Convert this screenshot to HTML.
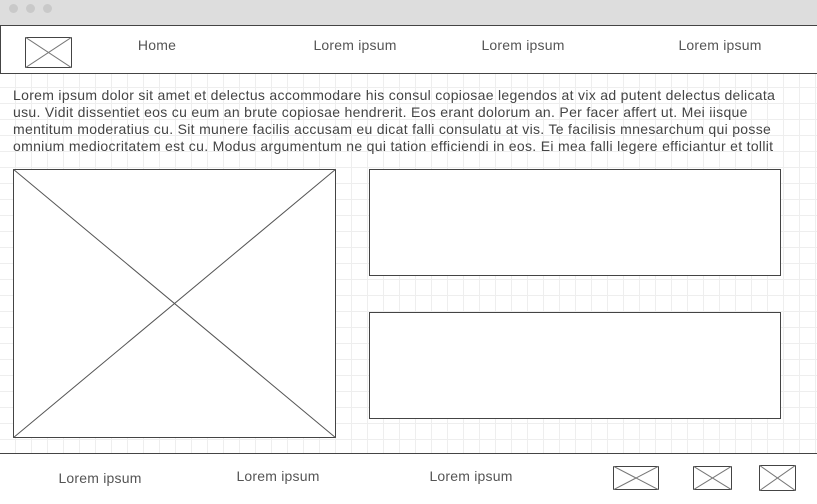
<!DOCTYPE html>
<html><head><style>
body{margin:0;width:817px;height:503px;overflow:hidden;position:relative;font-family:"Liberation Sans",sans-serif;color:#555;
background-color:#fff;
background-image:linear-gradient(#eee 1px,transparent 1px),linear-gradient(90deg,#eee 1px,transparent 1px);
background-size:16px 16px;background-position:15px 7px;}
.a{position:absolute}
.bar{left:0;top:0;width:817px;height:25px;background:#ddd}
.dot{width:9px;height:9px;border-radius:50%;background:#c9c9c9;top:4px}
.box{border:1px solid #444;box-sizing:border-box;background:#fff}
.t{font-size:14px;transform:translateX(-50%);white-space:nowrap;letter-spacing:0.2px}
.p{left:13px;top:87px;font-size:14px;line-height:17px;color:#444;white-space:nowrap;letter-spacing:0.31px}
</style></head><body>
<div class="a bar"></div>
<div class="a dot" style="left:9px"></div><div class="a dot" style="left:26px"></div><div class="a dot" style="left:43px"></div>
<div class="a box" style="left:0;top:25px;width:818px;height:49px;border-width:1px 0 1px 1px"></div>
<svg class="a" style="left:25px;top:37px" width="47" height="31"><rect x="0.5" y="0.5" width="46" height="30" fill="#fff" stroke="#444"/><path d="M0 0L47 31M47 0L0 31" stroke="#777"/></svg>
<div class="a t" style="left:157px;top:37px">Home</div>
<div class="a t" style="left:355px;top:37px">Lorem ipsum</div>
<div class="a t" style="left:523px;top:37px">Lorem ipsum</div>
<div class="a t" style="left:720px;top:37px">Lorem ipsum</div>
<div class="a p">Lorem ipsum dolor sit amet et delectus accommodare his consul copiosae legendos at vix ad putent delectus delicata<br>usu. Vidit dissentiet eos cu eum an brute copiosae hendrerit. Eos erant dolorum an. Per facer affert ut. Mei iisque<br>mentitum moderatius cu. Sit munere facilis accusam eu dicat falli consulatu at vis. Te facilisis mnesarchum qui posse<br>omnium mediocritatem est cu. Modus argumentum ne qui tation efficiendi in eos. Ei mea falli legere efficiantur et tollit</div>
<svg class="a" style="left:13px;top:169px" width="323" height="269"><rect x="0.5" y="0.5" width="322" height="268" fill="#fff" stroke="#444"/><path d="M0 0L323 269M323 0L0 269" stroke="#555"/></svg>
<div class="a box" style="left:369px;top:169px;width:412px;height:107px"></div>
<div class="a box" style="left:369px;top:312px;width:412px;height:107px"></div>
<div class="a" style="left:0;top:453px;width:817px;height:50px;background:#fff;border-top:1px solid #444"></div>
<div class="a t" style="left:100px;top:470px">Lorem ipsum</div>
<div class="a t" style="left:278px;top:468px">Lorem ipsum</div>
<div class="a t" style="left:471px;top:468px">Lorem ipsum</div>
<svg class="a" style="left:613px;top:466px" width="46" height="24"><rect x="0.5" y="0.5" width="45" height="23" fill="#fff" stroke="#444"/><path d="M0 0L46 24M46 0L0 24" stroke="#777"/></svg>
<svg class="a" style="left:693px;top:466px" width="39" height="24"><rect x="0.5" y="0.5" width="38" height="23" fill="#fff" stroke="#444"/><path d="M0 0L39 24M39 0L0 24" stroke="#777"/></svg>
<svg class="a" style="left:759px;top:465px" width="37" height="26"><rect x="0.5" y="0.5" width="36" height="25" fill="#fff" stroke="#444"/><path d="M0 0L37 26M37 0L0 26" stroke="#777"/></svg>
</body></html>
